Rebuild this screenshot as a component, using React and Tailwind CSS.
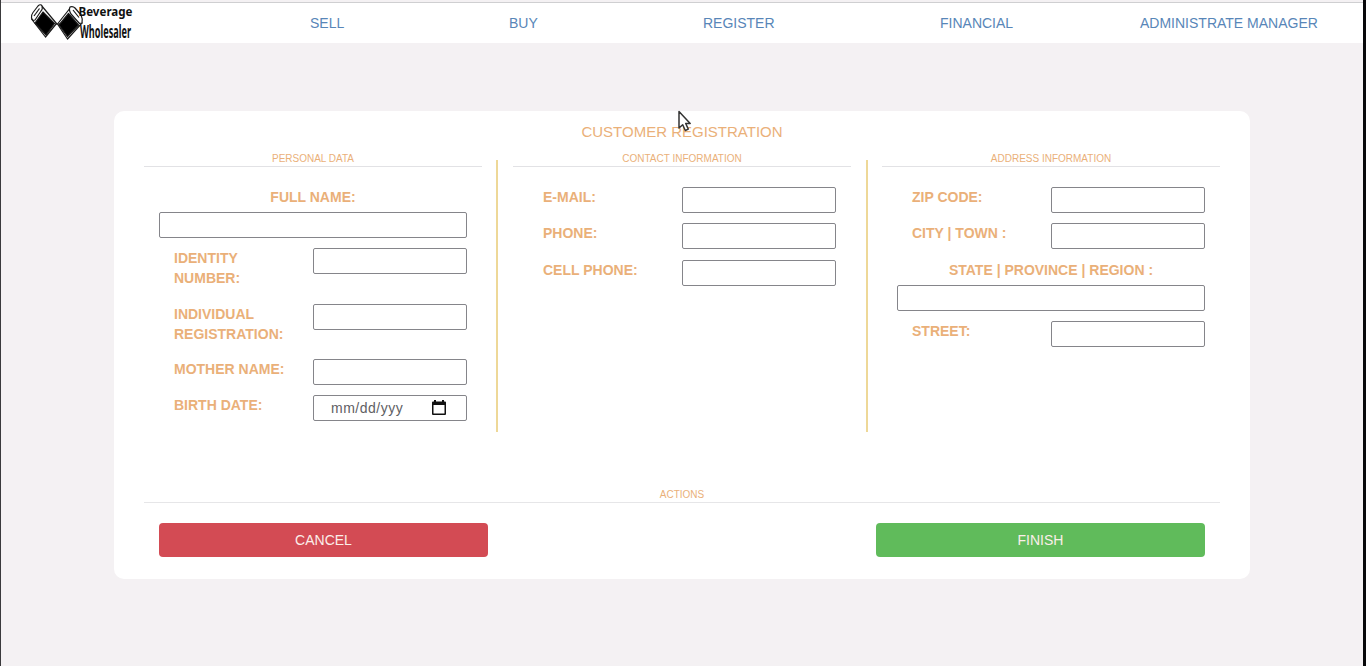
import React from "react";

const NAV = [
  { label: "SELL", cls: "w-[34px] ml-[175px]" },
  { label: "BUY", cls: "w-[29px] ml-[165px]" },
  { label: "REGISTER", cls: "w-[72px] ml-[165px]" },
  { label: "FINANCIAL", cls: "w-[73px] ml-[165px]" },
  { label: "ADMINISTRATE MANAGER", cls: "w-[178px] ml-[127px]" },
];

function Logo() {
  return (
    <svg width="106" height="40" viewBox="0 0 106 40" className="ml-[28px] shrink-0 overflow-visible" aria-label="Beverage Wholesaler">
      <g stroke="#1a1a1a" strokeWidth="1.2" strokeLinejoin="round">
        <path d="M12 2 L27.500 20.500 L16.500 34 L2.500 16 Z" fill="#fff" />
        <path d="M14 9 L25.500 20.500 L17 32 L6 20 Z" fill="#000" />
        <path d="M2.500 15 Q2 12 4 9.500 L9 3 Q11.500 0.500 13 3 Q14 6 12 8 L6 17 L4 17.500 Z" fill="#fff" />
        <path d="M5 13 L10.500 5.500" fill="none" />
        <path d="M42 4 L53 20 L38.500 36 L28.500 21 Z" fill="#fff" />
        <path d="M39.500 10.500 L49.500 22 L38.500 33.500 L30 22 Z" fill="#000" />
        <path d="M41 4 Q44 3 46 5 L52 12 Q54 16 53 20 L50.500 20.500 L42 11 Q39.500 7 41 4 Z" fill="#fff" />
        <path d="M44 7 L50 14.500 M26 21 H31" fill="none" />
      </g>
      <g fill="#111" fontFamily="'Noto Sans','DejaVu Sans',sans-serif" fontWeight="700">
        <text x="49.500" y="13" fontSize="13" textLength="54" lengthAdjust="spacingAndGlyphs">Beverage</text>
        <text x="51" y="34.500" fontSize="17" textLength="51" lengthAdjust="spacingAndGlyphs">Wholesaler</text>
      </g>
    </svg>
  );
}

function Section({ title, children }) {
  return (
    <section className="w-[338px] shrink-0">
      <h2 className="h-[17px] border-b border-[#e2e2e5] text-center text-[10px] leading-[17px]">{title}</h2>
      <div className="flex flex-col px-[15px] pt-5">{children}</div>
    </section>
  );
}

const box = "h-[26px] rounded-[2px] border border-[#85858a] bg-white outline-none";

function Field({ label, className = "h-[36px]", children }) {
  return (
    <label className={"flex shrink-0 items-start justify-between " + className}>
      <span className="w-[130px] pl-[15px] text-[14px] leading-5 font-bold">{label}</span>
      {children || <input className={"w-[154px] " + box} />}
    </label>
  );
}

function WideField({ label }) {
  return (
    <label className="flex h-[61px] shrink-0 flex-col">
      <span className="mb-[5px] text-center text-[14px] leading-5 font-bold">{label}</span>
      <input className={"w-full " + box} />
    </label>
  );
}

function Divider({ className }) {
  return <div className={"mt-[10px] h-[272px] w-[2px] shrink-0 bg-[#eed898] " + className} />;
}

export default function App() {
  return (
    <div className="relative h-[666px] w-[1366px] overflow-hidden border-r-[3px] border-l border-r-[#08080a] border-l-[#3a3a3c] bg-[#f4f1f3] font-['Liberation_Sans',Arial,sans-serif] text-[#eab079]">
      <header className="mt-[2px] flex h-[41px] items-center border-t border-[#cfcfd1] bg-white">
        <Logo />
        {NAV.map((n) => (
          <a key={n.label} href="#" className={"shrink-0 whitespace-nowrap text-[14px] leading-5 text-[#5886b8] " + n.cls}>
            {n.label}
          </a>
        ))}
      </header>

      <main className="mt-[68px] ml-[113px] h-[468px] w-[1136px] rounded-[10px] bg-white px-[30px] pt-[11px]">
        <h1 className="h-[28px] text-center text-[15px] leading-5">CUSTOMER REGISTRATION</h1>
        <div className="flex h-[336px]">
          <Section title="PERSONAL DATA">
            <WideField label="FULL NAME:" />
            <Field label="IDENTITY NUMBER:" className="h-[56px]" />
            <Field label="INDIVIDUAL REGISTRATION:" className="h-[55px]" />
            <Field label="MOTHER NAME:" />
            <Field label="BIRTH DATE:">
              <span className={"flex w-[154px] items-center justify-between pr-[20px] pl-[17px] text-[14px] tracking-[0.5px] text-[#606064] " + box}>
                mm/dd/yyy
                <svg width="14" height="15" viewBox="0 0 14 15" fill="#111" className="mb-[2px]">
                  <path fillRule="evenodd" d="M2 0h2v1.5h6V0h2v1.5h1q1 0 1 1V14q0 1-1 1H1q-1 0-1-1V2.500q0-1 1-1h1zM1.500 5v8.500h11V5z" />
                </svg>
              </span>
            </Field>
          </Section>
          <Divider className="mr-[15px] ml-[14px]" />
          <Section title="CONTACT INFORMATION">
            <Field label="E-MAIL:" />
            <Field label="PHONE:" className="h-[37px]" />
            <Field label="CELL PHONE:" />
          </Section>
          <Divider className="mr-[14px] ml-[15px]" />
          <Section title="ADDRESS INFORMATION">
            <Field label="ZIP CODE:" />
            <Field label="CITY | TOWN :" className="h-[37px]" />
            <WideField label="STATE | PROVINCE | REGION :" />
            <Field label="STREET:" />
          </Section>
        </div>
        <h2 className="h-[17px] border-b border-[#e6e6e8] text-center text-[10px] leading-[17px]">ACTIONS</h2>
        <div className="flex justify-between px-[15px] pt-5 text-[14px] text-[#fbeee9]">
          <button className="h-[34px] w-[329px] rounded-[4px] bg-[#d34b54]">CANCEL</button>
          <button className="h-[34px] w-[329px] rounded-[4px] bg-[#60bb5b]">FINISH</button>
        </div>
      </main>

      <svg className="absolute top-[110px] left-[676px]" width="14" height="23" viewBox="0 0 14 23">
        <path d="M2 1.500V18l3.700-3.300 2.600 5.800 3-1.400-2.600-5.600h4.500z" fill="#fff" stroke="#333" strokeWidth="1.500" strokeLinejoin="round" />
      </svg>
    </div>
  );
}
